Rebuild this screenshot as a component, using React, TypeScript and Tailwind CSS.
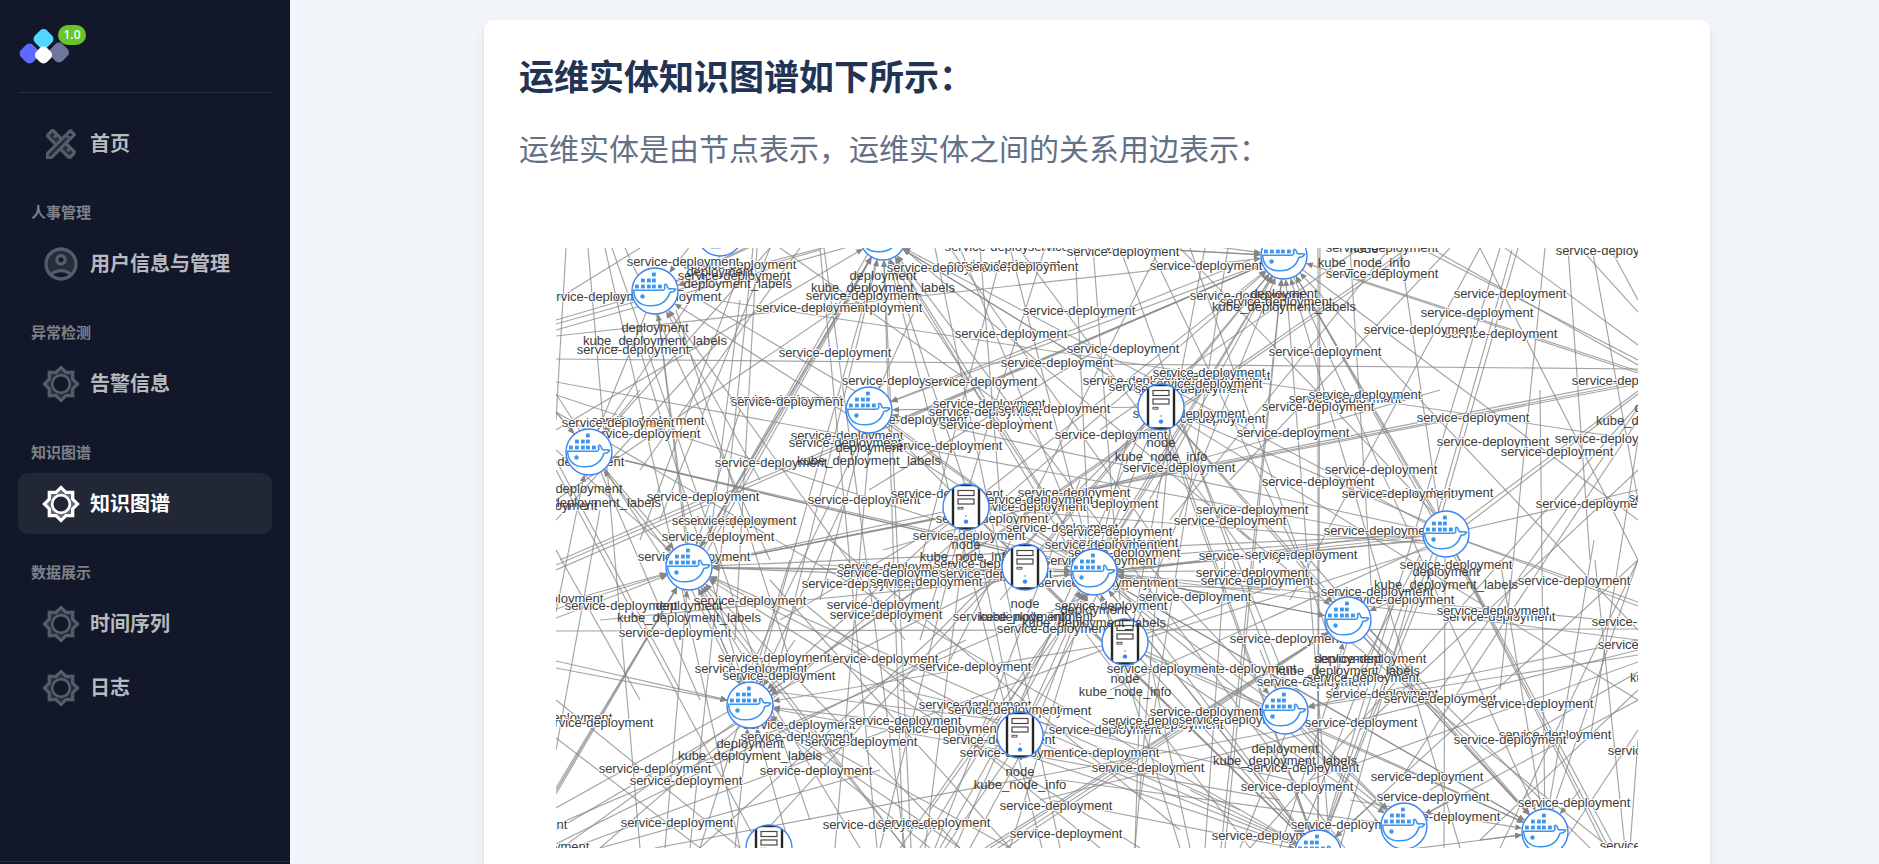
import type { ReactNode } from "react";

type Point = [number, number];
type Label = [number, number, string];

const FONT = "font-['Liberation_Sans','Noto_Sans_CJK_SC',sans-serif]";

/* ---------- graph data ---------- */

const pods: Point[] = [
  [720, 233], [883, 237], [1284, 256], [655, 291], [589, 452], [869, 410],
  [689, 567], [750, 705], [1094, 572], [1446, 534], [1348, 620], [1285, 711],
  [1404, 826], [1545, 832], [1318, 853],
];

const servers: Point[] = [
  [1161, 407], [966, 507], [1025, 567], [1125, 642], [1020, 735], [769, 848],
];

/* Captions of nodes that are stacked below their neighbours. */
const lowerLabels: Label[] = [
  [720, 272, "deployment"], [720, 284, "kube_deployment_labels"],
  [966, 545, "node"], [966, 557, "kube_node_info"],
];

const upperLabels: Label[] = [
  [655, 328, "deployment"], [655, 341, "kube_deployment_labels"],
  [883, 276, "deployment"], [883, 288, "kube_deployment_labels"],
  [1284, 294, "deployment"], [1284, 307, "kube_deployment_labels"],
  [1364, 249, "node"], [1364, 263, "kube_node_info"],
  [589, 489, "deployment"], [589, 503, "kube_deployment_labels"],
  [869, 448, "deployment"], [869, 461, "kube_deployment_labels"],
  [1161, 443, "node"], [1161, 457, "kube_node_info"],
  [1668, 408, "deployment"], [1668, 421, "kube_deployment_labels"],
  [689, 606, "deployment"], [689, 618, "kube_deployment_labels"],
  [750, 744, "deployment"], [750, 756, "kube_deployment_labels"],
  [1025, 604, "node"], [1025, 617, "kube_node_info"],
  [1094, 610, "deployment"], [1094, 623, "kube_deployment_labels"],
  [1125, 679, "node"], [1125, 692, "kube_node_info"],
  [1020, 772, "node"], [1020, 785, "kube_node_info"],
  [1446, 572, "deployment"], [1446, 585, "kube_deployment_labels"],
  [1348, 659, "deployment"], [1348, 671, "kube_deployment_labels"],
  [1285, 749, "deployment"], [1285, 761, "kube_deployment_labels"],
  [1702, 678, "kube_deployment_labels"],
];

const edgeLabels: Point[] = [
  [740, 265], [683, 262], [734, 276], [665, 297], [599, 297], [633, 350],
  [835, 353], [898, 381], [786, 400], [787, 402], [648, 421], [618, 423],
  [644, 434], [568, 462], [541, 506], [703, 497], [771, 463], [847, 436],
  [845, 443], [946, 446], [864, 500], [947, 494], [728, 521], [740, 521],
  [718, 537], [1004, 265], [943, 268], [1022, 267], [862, 296], [866, 308],
  [812, 308], [1001, 247], [1084, 247], [1123, 252], [1206, 266], [1246, 296],
  [1276, 302], [1079, 311], [1011, 334], [1123, 349], [1057, 363], [1325, 352],
  [981, 382], [911, 420], [1139, 381], [1165, 387], [1191, 389], [1214, 376],
  [1209, 373], [1206, 384], [1209, 419], [1189, 414], [985, 412], [989, 404],
  [1054, 409], [996, 425], [1111, 435], [1179, 468], [1345, 399], [1365, 395],
  [1318, 407], [1293, 433], [1318, 482], [1252, 510], [1230, 521], [1074, 493],
  [1102, 504], [1030, 507], [1037, 500], [992, 519], [1062, 528], [1116, 532],
  [969, 536], [1382, 248], [1382, 274], [1510, 294], [1477, 313], [1501, 334],
  [1420, 330], [1612, 251], [1628, 381], [1473, 418], [1493, 442], [1611, 439],
  [1557, 452], [1381, 470], [1437, 493], [1398, 494], [1592, 504], [1685, 498],
  [1380, 531], [694, 557], [547, 599], [621, 606], [750, 601], [675, 633],
  [894, 567], [893, 573], [858, 584], [883, 605], [886, 615], [882, 659],
  [774, 658], [751, 669], [779, 676], [556, 718], [597, 723], [799, 725],
  [797, 737], [944, 729], [905, 721], [861, 742], [816, 771], [655, 769],
  [686, 781], [677, 823], [511, 825], [879, 825], [934, 823], [533, 847],
  [926, 582], [990, 564], [996, 574], [1122, 543], [1101, 545], [1124, 553],
  [1100, 561], [1122, 583], [1094, 583], [1195, 597], [1111, 606], [1255, 556],
  [1301, 555], [1252, 573], [1257, 581], [1037, 617], [1009, 617], [1053, 629],
  [1286, 639], [1240, 669], [1163, 669], [975, 667], [975, 705], [1035, 711],
  [1004, 710], [999, 740], [1103, 753], [1016, 753], [1105, 730], [1167, 725],
  [1158, 721], [1235, 720], [1206, 712], [1148, 768], [1056, 806], [1066, 834],
  [1268, 836], [1297, 787], [1456, 565], [1398, 600], [1377, 592], [1574, 581],
  [1499, 617], [1493, 611], [1648, 622], [1654, 645], [1370, 659], [1314, 683],
  [1313, 682], [1363, 678], [1382, 694], [1440, 699], [1537, 704], [1361, 723],
  [1555, 735], [1510, 740], [1664, 751], [1303, 768], [1427, 777], [1433, 797],
  [1574, 803], [1444, 817], [1347, 825], [1656, 846],
];

/* Edges that run into a pod, listed by the pod they end at. */
const incoming: { to: Point; from: Point[] }[] = [
  {
    to: [655, 291],
    from: [
      [730, 195], [762, 240], [900, 228], [820, 215], [1638, 440], [1094, 572],
      [905, 640], [760, 480], [690, 560],
    ],
  },
  {
    to: [883, 237],
    from: [
      [690, 563], [694, 565], [699, 566], [903, 848], [911, 848], [556, 430],
      [556, 330], [1161, 407], [1638, 700], [1094, 572], [1042, 848], [1125, 642],
      [1345, 848], [970, 500], [780, 660], [1446, 534],
    ],
  },
  {
    to: [1284, 256],
    from: [
      [556, 336], [556, 565], [556, 570], [600, 848], [1161, 407], [1025, 567],
      [1130, 640], [1020, 735], [1225, 848], [1221, 848], [920, 848], [1330, 848],
      [1460, 848], [1446, 534], [1440, 520], [920, 236], [980, 240], [1060, 225],
      [1638, 373], [1638, 630], [1360, 200], [966, 507], [1470, 180], [900, 420],
    ],
  },
  {
    to: [589, 452],
    from: [
      [556, 612], [905, 848], [1094, 572], [1230, 600], [640, 390], [655, 291],
      [556, 412], [770, 248],
    ],
  },
  {
    to: [869, 410],
    from: [[1284, 256], [1161, 407], [915, 310], [1450, 535], [1250, 260], [820, 600]],
  },
  {
    to: [689, 567],
    from: [
      [556, 788], [556, 791], [556, 794], [556, 604], [556, 609], [556, 618],
      [1638, 382], [1638, 379], [1638, 384], [1446, 534], [883, 237], [878, 236],
      [556, 412], [655, 291], [665, 848], [1094, 572], [1280, 590], [1240, 810],
      [966, 507], [860, 848], [905, 848], [960, 848], [1140, 848], [1020, 735],
      [750, 705], [740, 410], [556, 450],
    ],
  },
  {
    to: [750, 705],
    from: [
      [689, 567], [680, 567], [1408, 248], [1414, 248], [1125, 642], [1025, 567],
      [1020, 735], [1280, 800], [930, 848], [960, 848], [1010, 848], [556, 661],
      [556, 668], [883, 237], [966, 507], [640, 350], [795, 640], [845, 500],
      [735, 848], [790, 848],
    ],
  },
  {
    to: [1094, 572],
    from: [
      [556, 395], [589, 452], [869, 410], [860, 400], [820, 565], [700, 568],
      [600, 620], [966, 507], [1025, 567], [1161, 407], [1284, 256], [1190, 420],
      [1446, 534], [1450, 538], [1348, 620], [1638, 640], [1545, 832], [1404, 826],
      [1318, 853], [1285, 711], [1020, 735], [1030, 740], [900, 848], [940, 848],
      [1010, 848], [1180, 848], [960, 248], [1010, 248], [1130, 430], [1320, 570],
    ],
  },
  {
    to: [1348, 620],
    from: [[985, 848], [990, 848], [995, 850], [1000, 852], [1094, 572], [1395, 600], [1240, 530], [1330, 700], [1161, 407]],
  },
  {
    to: [1285, 711],
    from: [[1638, 640], [1125, 540], [1020, 735], [1260, 650], [1638, 655]],
  },
  {
    to: [1404, 826],
    from: [[1125, 642], [1284, 711], [1638, 700], [1060, 780], [1450, 800], [1285, 705]],
  },
  {
    to: [1545, 832],
    from: [
      [1125, 642], [1130, 648], [1094, 572], [1284, 256], [1348, 620], [1404, 850],
      [1161, 407], [1500, 560], [1580, 790], [1638, 560], [1540, 390], [1310, 560],
      [1480, 840], [1350, 800],
    ],
  },
  {
    to: [1318, 853],
    from: [
      [1094, 572], [1100, 560], [1020, 735], [1040, 730], [966, 507], [869, 410],
      [1161, 407], [1155, 400], [1025, 567], [1125, 642], [1318, 248], [1320, 248],
      [1404, 600], [1638, 560], [1446, 534], [1440, 534], [1500, 248], [1376, 800],
      [1290, 780], [1190, 790], [1050, 800], [1140, 860],
    ],
  },
];

const crossing: [number, number, number, number][] = [
  [556, 359, 1638, 369], [556, 631, 1638, 629], [1445, 558, 1444, 848],
  [556, 382, 1446, 545], [556, 412, 1285, 836], [566, 248, 556, 420],
  [588, 248, 640, 848], [605, 248, 740, 848], [612, 248, 810, 820],
  [625, 248, 770, 560], [660, 520, 770, 248], [753, 248, 690, 848],
  [556, 300, 640, 248], [740, 270, 640, 540], [724, 250, 589, 452],
  [556, 500, 850, 300], [556, 520, 720, 340], [800, 248, 640, 470],
  [556, 394, 690, 600], [556, 470, 760, 848], [556, 550, 640, 700],
  [556, 700, 740, 848], [556, 738, 700, 848], [556, 808, 740, 705],
  [556, 830, 760, 710], [556, 844, 966, 640], [572, 848, 1290, 580],
  [556, 825, 1100, 590], [600, 848, 880, 770], [655, 848, 1284, 730],
  [556, 852, 780, 690], [820, 248, 877, 848], [824, 248, 905, 848],
  [757, 248, 735, 640], [935, 248, 1060, 848], [950, 248, 1170, 560],
  [980, 248, 1000, 500], [1093, 248, 1120, 600], [1075, 248, 1090, 560],
  [1045, 248, 920, 640], [1000, 260, 905, 620], [1020, 250, 1250, 560],
  [1160, 248, 950, 660], [1205, 248, 1130, 640], [1228, 248, 1140, 800],
  [1180, 248, 1440, 520], [1150, 248, 1300, 560], [1190, 248, 1330, 640],
  [1120, 248, 1290, 720], [1400, 248, 1440, 520], [1350, 248, 1372, 600],
  [1480, 248, 1290, 600], [1512, 250, 1436, 520], [1518, 248, 1440, 520],
  [1545, 248, 1500, 690], [1568, 248, 1590, 560], [1480, 248, 1638, 560],
  [1420, 248, 1638, 360], [1505, 248, 1638, 345], [1580, 248, 1638, 312],
  [1592, 248, 1638, 500], [1610, 248, 1638, 300], [1430, 248, 1638, 365],
  [1450, 248, 1230, 480], [1390, 248, 1170, 520], [1360, 248, 1100, 430],
  [1446, 534, 1638, 490], [1446, 534, 1638, 391], [1462, 528, 1638, 394],
  [1446, 534, 1638, 602], [1446, 534, 1638, 606], [1446, 534, 1615, 848],
  [1446, 534, 1605, 848], [1446, 534, 1609, 848], [1094, 572, 1638, 623],
  [1284, 256, 1638, 520], [1330, 270, 1638, 371], [1310, 300, 1490, 620],
  [1638, 420, 1400, 780], [1638, 408, 1440, 690], [1638, 405, 1250, 848],
  [1638, 470, 1360, 730], [1638, 440, 1590, 740], [1638, 560, 1500, 848],
  [1638, 662, 1310, 780], [1638, 650, 1040, 800], [1638, 672, 1430, 790],
  [1638, 690, 1480, 840], [1638, 730, 1560, 848], [1595, 560, 1625, 848],
  [1594, 540, 1550, 800], [1638, 740, 1630, 848], [1348, 640, 1610, 848],
  [1370, 630, 1590, 848], [1348, 620, 1545, 832], [1285, 711, 1400, 848],
  [1285, 735, 1240, 848], [1348, 640, 1280, 848], [1400, 580, 1300, 840],
  [1420, 560, 1340, 848], [1420, 555, 1350, 690], [966, 507, 1446, 545],
  [1161, 407, 1446, 530], [1094, 560, 1420, 536], [1100, 575, 1424, 530],
  [1020, 580, 1420, 540], [883, 550, 1440, 390], [1097, 350, 869, 490],
  [1110, 690, 1430, 545], [1140, 640, 1430, 548], [930, 640, 700, 848],
  [930, 810, 1140, 520], [935, 848, 1080, 480], [955, 848, 1150, 410],
  [1040, 530, 750, 848], [900, 690, 1290, 780], [860, 700, 1318, 853],
  [800, 600, 1100, 848], [770, 580, 1010, 848], [830, 540, 1180, 830],
  [1150, 660, 1190, 848], [1060, 600, 1250, 848], [1140, 690, 1135, 848],
  [1225, 560, 1205, 848], [1170, 430, 1135, 848], [1180, 420, 1290, 690],
  [1161, 407, 930, 640], [1150, 420, 1000, 600], [966, 530, 925, 848],
  [960, 530, 880, 848], [975, 530, 1010, 700], [950, 520, 780, 620],
  [1020, 755, 970, 848], [1010, 755, 945, 848], [1000, 720, 760, 690],
  [700, 848, 790, 560], [870, 435, 835, 848], [863, 434, 740, 690],
  [890, 260, 1080, 550], [905, 250, 1250, 540], [560, 560, 700, 500],
  [556, 320, 655, 291], [556, 324, 820, 250], [700, 300, 870, 400],
  [780, 248, 1010, 410], [740, 300, 710, 540], [676, 310, 790, 660],
  [600, 470, 700, 700], [556, 460, 680, 690], [600, 510, 556, 750],
];

/* ---------- graph drawing ---------- */

const RADIUS = 23;

function Arrow({ from, to }: { from: Point; to: Point }) {
  const dx = to[0] - from[0];
  const dy = to[1] - from[1];
  const length = Math.hypot(dx, dy);
  const ux = dx / length;
  const uy = dy / length;
  const tip: Point = [to[0] - ux * RADIUS, to[1] - uy * RADIUS];
  const base: Point = [tip[0] - ux * 7, tip[1] - uy * 7];
  const points = [
    tip,
    [base[0] - uy * 3, base[1] + ux * 3],
    [base[0] + uy * 3, base[1] - ux * 3],
  ]
    .map((p) => p.join(","))
    .join(" ");
  return (
    <g>
      <line x1={from[0]} y1={from[1]} x2={base[0]} y2={base[1]} />
      <polygon points={points} fill="#858585" stroke="none" />
    </g>
  );
}

function Pod({ at }: { at: Point }) {
  const boxes: Point[] = [
    [-20, -6], [-14, -6], [-8, -6], [-3, -6], [3, -6],
    [-14, -12], [-8, -12], [-3, -12], [-3, -18],
  ];
  return (
    <g transform={`translate(${at[0]} ${at[1]})`}>
      <circle r={RADIUS} fill="#fff" stroke="#3b82f6" strokeWidth={1.4} />
      {boxes.map(([x, y]) => (
        <rect key={`${x} ${y}`} x={x} y={y - 0.4} width={3.8} height={3.8} fill="#3b96ee" />
      ))}
      <path
        d="M-21.5-.8H7.5C9.4-1 10.4-2.2 9.6-4.4 9-6.6 10.6-7.2 11.8-5.8 13-4.3 12.2-2.8 14-2.3 16-1.7 18.6-3 20.8-1.8 19.8 0 17.6 1.4 15 1.3 12.6 8.7 6.5 14.8-4 14.8-15 15-20.6 9.6-21.5-.8Z"
        fill="none"
        stroke="#3b96ee"
        strokeWidth={1.6}
        strokeLinejoin="round"
      />
      <circle cx={-12.5} cy={5.5} r={2.2} fill="#3b96ee" />
    </g>
  );
}

function Server({ at }: { at: Point }) {
  return (
    <g transform={`translate(${at[0]} ${at[1]})`}>
      <circle r={RADIUS} fill="#fff" />
      <g clipPath="url(#server-clip)">
        <rect x={-13} y={-22} width={26} height={43.5} fill="#fff" stroke="#262626" strokeWidth={2.4} />
        <rect x={-8} y={-16.5} width={16} height={5} fill="none" stroke="#4a4646" strokeWidth={1.2} />
        <rect x={-8} y={-8} width={16} height={5} fill="none" stroke="#4a4646" strokeWidth={1.2} />
        <rect x={-8} y={0.3} width={5} height={1.8} fill="none" stroke="#4a4646" strokeWidth={0.9} />
        <circle cy={9} r={0.7} fill="#555" />
        <circle cy={14.6} r={2.2} fill="#2f8af5" />
      </g>
      <circle r={RADIUS} fill="none" stroke="#3b82f6" strokeWidth={1.4} />
    </g>
  );
}

function GraphText({ x, y, children }: { x: number; y: number; children: string }) {
  return (
    <text x={x} y={y + 4} textAnchor="middle">
      {children}
    </text>
  );
}

function Captions({ labels }: { labels: Label[] }) {
  return (
    <g className="text-[13px] font-['Liberation_Sans',sans-serif]" fill="#3c3c3c">
      {labels.map(([x, y, label]) => (
        <GraphText key={`${x} ${y}`} x={x} y={y}>
          {label}
        </GraphText>
      ))}
    </g>
  );
}

function KnowledgeGraph() {
  return (
    <svg
      viewBox="556 248 1082 600"
      role="img"
      aria-label="运维实体知识图谱"
      className="block w-full overflow-hidden"
    >
      <defs>
        <clipPath id="server-clip">
          <circle r={RADIUS} />
        </clipPath>
      </defs>
      <g stroke="#858585" strokeWidth={1.15} strokeOpacity={0.75}>
        {crossing.map(([x1, y1, x2, y2], i) => (
          <line key={i} x1={x1} y1={y1} x2={x2} y2={y2} />
        ))}
        {incoming.map(({ to, from }) =>
          from.map((start, i) => <Arrow key={`${to[0]}-${i}`} from={start} to={to} />),
        )}
      </g>
      <g
        className="text-[13px] font-['Liberation_Sans',sans-serif] [paint-order:stroke]"
        fill="#3c3c3c"
        stroke="#fff"
        strokeWidth={2}
        strokeLinejoin="round"
      >
        {edgeLabels.map(([x, y], i) => (
          <GraphText key={i} x={x} y={y}>
            service-deployment
          </GraphText>
        ))}
      </g>
      <Captions labels={lowerLabels} />
      {pods.map((at) => (
        <Pod key={at.join()} at={at} />
      ))}
      {servers.map((at) => (
        <Server key={at.join()} at={at} />
      ))}
      <Captions labels={upperLabels} />
    </svg>
  );
}

/* ---------- icons ---------- */

function IconFrame({ children }: { children: ReactNode }) {
  return (
    <svg viewBox="0 0 24 24" fill="currentColor" className="size-10" aria-hidden="true">
      {children}
    </svg>
  );
}

function BrightnessIcon() {
  return (
    <IconFrame>
      <path
        fillRule="evenodd"
        opacity=".3"
        d="M18 9.52V6h-3.52L12 3.52 9.52 6H6v3.52L3.52 12 6 14.48V18h3.52L12 20.48 14.48 18H18v-3.52L20.48 12ZM12 17.25a5.25 5.25 0 1 1 0-10.5 5.25 5.25 0 0 1 0 10.5Z"
      />
      <path d="M20 8.69V4h-4.69L12 .69 8.69 4H4v4.69L.69 12 4 15.31V20h4.69L12 23.31 15.31 20H20v-4.69L23.31 12 20 8.69zm-2 5.79V18h-3.52L12 20.48 9.52 18H6v-3.52L3.52 12 6 9.52V6h3.52L12 3.52 14.48 6H18v3.52L20.48 12 18 14.48z" />
      <circle cx="12" cy="12" r="5.3" fill="none" stroke="currentColor" strokeWidth="1.6" />
    </IconFrame>
  );
}

function AccountIcon() {
  return (
    <IconFrame>
      <path
        fillRule="evenodd"
        opacity=".3"
        d="M12 4c-4.42 0-8 3.58-8 8 0 1.95.7 3.73 1.86 5.12C7.55 15.8 9.68 15 12 15s4.45.8 6.14 2.12C19.3 15.73 20 13.95 20 12c0-4.42-3.58-8-8-8zm0 9c-1.93 0-3.5-1.57-3.5-3.5S10.07 6 12 6s3.5 1.57 3.5 3.5S13.93 13 12 13z"
      />
      <path d="M12 2C6.48 2 2 6.48 2 12s4.48 10 10 10 10-4.48 10-10S17.52 2 12 2zM7.35 18.5C8.66 17.56 10.26 17 12 17s3.34.56 4.65 1.5c-1.31.94-2.91 1.5-4.65 1.5s-3.34-.56-4.65-1.5zm10.79-1.38C16.45 15.8 14.32 15 12 15s-4.45.8-6.14 2.12C4.7 15.73 4 13.95 4 12c0-4.42 3.58-8 8-8s8 3.58 8 8c0 1.95-.7 3.73-1.86 5.12z" />
      <path d="M12 6c-1.93 0-3.5 1.57-3.5 3.5S10.07 13 12 13s3.5-1.57 3.5-3.5S13.93 6 12 6zm0 5c-.83 0-1.5-.67-1.5-1.5S11.17 8 12 8s1.5.67 1.5 1.5S12.83 11 12 11z" />
    </IconFrame>
  );
}

function DesignIcon() {
  return (
    <IconFrame>
      <path d="M16.24 11.51l1.57-1.57-3.75-3.75-1.57 1.57-4.14-4.13c-.78-.78-2.05-.78-2.83 0l-1.9 1.9c-.78.78-.78 2.05 0 2.83l4.13 4.13L3 17.25V21h3.75l4.76-4.76 4.13 4.13c.95.95 2.23.6 2.83 0l1.9-1.9c.78-.78.78-2.05 0-2.83l-4.13-4.13zm-7.06-.44L5.04 6.94l1.89-1.9L8.2 6.31 7.02 7.5l1.41 1.41 1.19-1.19 1.45 1.45-1.89 1.9zm7.88 7.89l-4.13-4.13 1.9-1.9 1.45 1.45-1.19 1.19 1.41 1.41 1.19-1.19 1.27 1.27-1.9 1.9z" />
      <path d="M20.71 7.04a.996.996 0 0 0 0-1.41l-2.34-2.34c-.47-.47-1.12-.29-1.41 0l-2.9 2.9 3.75 3.75z" />
      <path d="M6.93 5.04 5.04 6.94l4.14 4.13 1.89-1.9-1.45-1.45-1.19 1.19L7.02 7.5 8.2 6.31zM17.06 18.96l-4.13-4.13 1.9-1.9 1.45 1.45-1.19 1.19 1.41 1.41 1.19-1.19 1.27 1.27z" opacity=".3" />
      <path d="M5 19 15.5 8.500" stroke="#121829" strokeWidth="1.600" />
      <path d="M5 19 15.5 8.500" stroke="currentColor" strokeOpacity=".3" strokeWidth="1.600" />
      <circle cx="17.5" cy="6.500" r="1" fill="#121829" />
    </IconFrame>
  );
}

/* ---------- sidebar ---------- */

function Logo() {
  return (
    <a href="#" aria-label="1.0" className="relative block h-10 w-[52px]">
      <svg viewBox="0 0 52 40" className="h-10 w-[52px]" aria-hidden="true">
        <rect x="3" y="20" width="17" height="17" rx="5" fill="#5b6bff" transform="rotate(45 11.5 28.5)" />
        <rect x="32.5" y="19" width="17" height="17" rx="5" fill="#70759e" transform="rotate(45 41 27.5)" />
        <rect x="17" y="5.5" width="17" height="17" rx="5" fill="#50d8ff" transform="rotate(45 25.5 14)" />
        <rect x="18" y="22.5" width="15" height="15" rx="5" fill="#fff" transform="rotate(45 25.5 30)" />
      </svg>
      <span className="absolute top-0 left-10 flex h-5 w-7 items-center justify-center rounded-full bg-[#68c52b] font-['Noto_Sans',sans-serif] text-xs font-medium text-white">
        1.0
      </span>
    </a>
  );
}

function NavItem({ icon, label, active = false }: { icon: ReactNode; label: string; active?: boolean }) {
  return (
    <li>
      <a
        href="#"
        aria-current={active ? "page" : undefined}
        className={
          active
            ? "flex h-[61px] items-center gap-[9px] rounded-[10px] bg-[#222736] pl-[23px] text-white"
            : "flex h-[61px] items-center gap-[9px] rounded-[10px] pl-[23px] text-[#b8babf]"
        }
      >
        <span className={active ? "text-white" : "text-[#575c69]"}>{icon}</span>
        <span className="text-xl font-bold">{label}</span>
      </a>
    </li>
  );
}

function NavSection({ title, children }: { title?: string; children: ReactNode }) {
  return (
    <section>
      {title && (
        <h2 className="flex h-[59px] items-end pb-[10px] pl-[13px] text-[15px] leading-5 font-bold text-[#7e8188]">
          {title}
        </h2>
      )}
      <ul className="flex flex-col gap-[3px]">{children}</ul>
    </section>
  );
}

function Sidebar() {
  return (
    <aside className="flex w-[290px] shrink-0 flex-col bg-[#121829]">
      <div className="mx-[18px] flex-1">
        <div className="border-b border-[#2a2f3e] pt-[25px] pb-[27px]">
          <Logo />
        </div>
        <nav className="pt-[20px]">
          <NavSection>
            <NavItem icon={<DesignIcon />} label="首页" />
          </NavSection>
          <NavSection title="人事管理">
            <NavItem icon={<AccountIcon />} label="用户信息与管理" />
          </NavSection>
          <NavSection title="异常检测">
            <NavItem icon={<BrightnessIcon />} label="告警信息" />
          </NavSection>
          <NavSection title="知识图谱">
            <NavItem icon={<BrightnessIcon />} label="知识图谱" active />
          </NavSection>
          <NavSection title="数据展示">
            <NavItem icon={<BrightnessIcon />} label="时间序列" />
            <NavItem icon={<BrightnessIcon />} label="日志" />
          </NavSection>
        </nav>
      </div>
      <div className="h-[3px] border-t border-[#2a2f3e]" />
    </aside>
  );
}

export default function App() {
  return (
    <div className={`flex h-screen overflow-hidden bg-[#f2f5f9] ${FONT}`}>
      <Sidebar />
      <main className="flex flex-1 items-start justify-center pt-5 pl-[25px]">
        <article className="w-full max-w-[1226px] rounded-[10px] bg-white px-[35px] pt-9 pb-16 shadow-[0_9px_16px_rgba(159,162,191,0.18),0_2px_2px_rgba(159,162,191,0.32)]">
          <h1 className="text-[35px] leading-[44px] font-bold text-[#223354]">
            运维实体知识图谱如下所示：
          </h1>
          <p className="mt-8 text-[30px] leading-9 text-[#647087]">
            运维实体是由节点表示，运维实体之间的关系用边表示：
          </p>
          <div className="mx-[37px] mt-20">
            <KnowledgeGraph />
          </div>
        </article>
      </main>
    </div>
  );
}
